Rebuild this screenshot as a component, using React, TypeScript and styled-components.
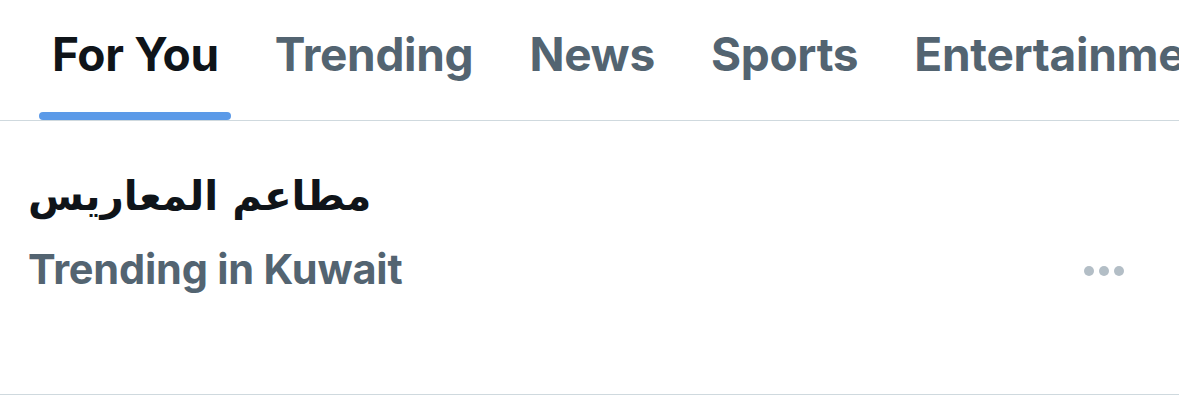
import React from "react";
import styled, { createGlobalStyle } from "styled-components";

const Global = createGlobalStyle`
  *, *::before, *::after { box-sizing: border-box; }
  html, body { margin: 0; padding: 0; background: #ffffff; }
  body { font-family: Inter, "Noto Sans", "DejaVu Sans", sans-serif; overflow: hidden; }
`;

const Page = styled.div`
  width: 1179px;
  height: 419px;
  background: #ffffff;
  overflow: hidden;
`;

const TabBar = styled.nav`
  display: flex;
  height: 121px;
  border-bottom: 1px solid #cfd9de;
  padding-left: 24px;
  white-space: nowrap;
  overflow: hidden;
`;

const Tab = styled.div<{ $active?: boolean }>`
  position: relative;
  display: flex;
  align-items: flex-start;
  padding: 26px 28px 0;
  font-size: 46px;
  font-weight: 700;
  letter-spacing: -0.3px;
  color: ${(p) => (p.$active ? "#0f1419" : "#536471")};
  flex-shrink: 0;
`;

const Indicator = styled.span`
  position: absolute;
  left: 15px;
  right: 16px;
  bottom: 0;
  height: 8px;
  border-radius: 4px;
  background: #5b9ae8;
`;

const Trend = styled.div`
  display: flex;
  justify-content: space-between;
  align-items: flex-start;
  height: 274px;
  padding: 0 55px 0 28px;
  border-bottom: 1px solid #cfd9de;
`;

const TrendText = styled.div`
  display: flex;
  flex-direction: column;
  padding-top: 44px;
`;

const Title = styled.div`
  font-family: "DejaVu Sans", "Noto Sans", sans-serif;
  font-size: 40.5px;
  font-weight: 700;
  color: #0f1419;
  line-height: 62px;
  direction: rtl;
  text-align: left;
`;

const Meta = styled.div`
  font-family: Inter, sans-serif;
  font-size: 41.5px;
  font-weight: 700;
  letter-spacing: -0.2px;
  color: #536471;
  line-height: 60px;
  margin-top: 12px;
`;

const More = styled.div`
  display: flex;
  gap: 5px;
  margin-top: 145px;
`;

const Dot = styled.span`
  width: 10px;
  height: 10px;
  border-radius: 50%;
  background: #b3bec6;
`;

const tabs = ["For You", "Trending", "News", "Sports", "Entertainment"];

export default function App() {
  return (
    <Page>
      <Global />
      <TabBar>
        {tabs.map((t, i) => (
          <Tab key={t} $active={i === 0}>
            {t}
            {i === 0 && <Indicator />}
          </Tab>
        ))}
      </TabBar>
      <Trend>
        <TrendText>
          <Title>مطاعم المعاريس</Title>
          <Meta>Trending in Kuwait</Meta>
        </TrendText>
        <More>
          <Dot />
          <Dot />
          <Dot />
        </More>
      </Trend>
    </Page>
  );
}
